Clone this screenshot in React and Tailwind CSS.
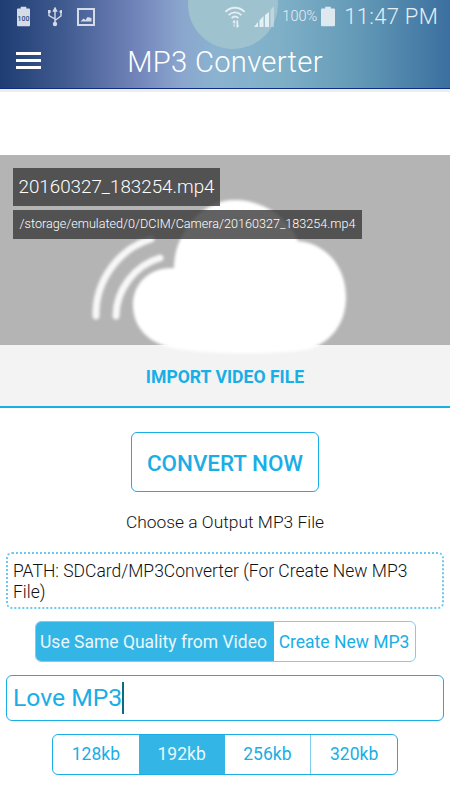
import React from "react";

const BITRATES = ["128kb", "192kb", "256kb", "320kb"];

const StatusLeft = () => (
  <div className="flex items-center">
    <svg width="13" height="21" viewBox="0 0 14 21" className="ml-[17px]">
      <path d="M4 0h6v2h3a1 1 0 0 1 1 1v17a1 1 0 0 1-1 1H1a1 1 0 0 1-1-1V3a1 1 0 0 1 1-1h3z" fill="#d5dce8" />
      <text x="7" y="15" textAnchor="middle" fontSize="7.5" fontFamily="Roboto" fontWeight="500" fill="#2d4a7c">100</text>
    </svg>
    <svg width="14" height="20" viewBox="0 0 14 20" className="ml-[18px]">
      <path d="M7 1v15M7 1L5.500 4h3zM1 5v3.500L7 12M13 5v4l-6 4.500" fill="none" stroke="#d5dce8" strokeWidth="1.400" />
      <rect x="0" y="3" width="2.600" height="3" fill="#d5dce8" />
      <circle cx="13" cy="4.500" r="1.500" fill="#d5dce8" />
      <circle cx="7" cy="17" r="2.200" fill="#d5dce8" />
    </svg>
    <svg width="18" height="18" viewBox="0 0 18 18" className="ml-[15px]">
      <rect x="1" y="1" width="16" height="16" fill="none" stroke="#d5dce8" strokeWidth="2" />
      <path d="M3.500 13.500l3-3 2 1.500 2-3 4 1v3.500z" fill="#d5dce8" />
    </svg>
  </div>
);

const StatusRight = () => (
  <div className="flex items-center">
    <svg width="22" height="26" viewBox="0 0 24 26" className="mb-[2px]">
      <path d="M1.500 8.500C7.500 2.500 16.500 2.500 22.500 8.500M5 12c4.200-4 9.800-4 14 0M8.300 15.300c2.200-2 5.200-2 7.400 0" fill="none" stroke="#e4eef3" strokeWidth="2" />
      <path d="M10.500 25v-5H9l2-3 2 3h-1.500v5zM13.500 18h2v5H17l-2.500 3-1-1z" fill="#e4eef3" />
    </svg>
    <svg width="20" height="21" viewBox="0 0 20 21" className="ml-[8px]">
      <path d="M0 21h4v-5zM5.500 21h4V10l-4 4.500zM11 21h4V6l-4 3z" fill="#e6eff4" />
      <path d="M16.500 21H20V0l-3.500 4z" fill="#e6eff4" opacity="0.45" />
    </svg>
    <span className="ml-[8px] pt-[1px] text-[14.500px] leading-none font-light text-[#e6eff4]">100%</span>
    <svg width="14" height="21" viewBox="0 0 15 21" className="ml-[4px]">
      <path d="M4.500 0h6v2H14a1 1 0 0 1 1 1v17a1 1 0 0 1-1 1H1a1 1 0 0 1-1-1V3a1 1 0 0 1 1-1h3.500z" fill="#dde8ef" />
    </svg>
    <span className="ml-[9px] mr-[12px] text-[22px] leading-none font-light tracking-[0.3px] text-[#e6eff4]">11:47 PM</span>
  </div>
);

const Header = () => (
  <div className="relative h-[89px] overflow-hidden border-b border-b-[#0f2f80] bg-[linear-gradient(90deg,#1f3d73_0%,#3f5a8f_14%,#7183b9_30%,#8aa5cd_40%,#8bb3d0_48%,#7fb0c8_62%,#6399b6_80%,#3a6f9f_100%)]">
    <div className="absolute left-[188px] top-[-41px] h-[90px] w-[90px] rounded-full bg-[#9fc2cf]"></div>
    <div className="relative flex h-[33px] items-center justify-between">
      <StatusLeft />
      <StatusRight />
    </div>
    <div className="relative flex h-[55px] items-center">
      <div className="ml-[16px] flex w-[25px] flex-col gap-[4px]">
        <div className="h-[3px] bg-white"></div>
        <div className="h-[3px] bg-white"></div>
        <div className="h-[3px] bg-white"></div>
      </div>
      <div className="absolute left-0 right-0 top-[10px] text-center text-[29.200px] leading-[38px] font-light tracking-[0.3px] text-white">
        MP3 Converter
      </div>
    </div>
  </div>
);

const VideoPanel = () => (
  <div className="relative">
    <svg width="450" height="210" viewBox="0 0 450 210" className="absolute left-0 top-0 z-10">
      <defs>
        <filter id="soft">
          <feGaussianBlur stdDeviation="1.600" />
        </filter>
      </defs>
      <g filter="url(#soft)">
        <path
          d="M168 192C146 186 133 170 133 150C133 128 150 112 174 113C174 80 200 45 235 45C262 45 288 62 298 86C326 88 346 112 346 142C346 168 332 186 310 194C280 200 200 200 168 192Z"
          fill="#ffffff"
        />
        <path d="M96 161C95 127 118 94 151 84" fill="none" stroke="#ffffff" strokeWidth="7" strokeLinecap="round" opacity="0.9" />
        <path d="M116 161C116 135 135 110 160 103" fill="none" stroke="#ffffff" strokeWidth="7" strokeLinecap="round" opacity="0.9" />
      </g>
    </svg>
    <div className="h-[190px] bg-[#b4b4b4] pl-[13px] pt-[13px]">
      <div className="relative z-20 flex h-[38px] w-[207px] items-center justify-center bg-[#3a3a3a]/80 text-[18.800px] leading-none font-light text-white">
        20160327_183254.mp4
      </div>
      <div className="relative z-20 mt-[4px] flex h-[29px] w-[349px] items-center justify-center bg-[#3a3a3a]/80 text-[12.600px] leading-none font-light text-white">
        /storage/emulated/0/DCIM/Camera/20160327_183254.mp4
      </div>
    </div>
    <div className="flex h-[63px] items-center justify-center border-b-2 border-b-[#19aee6] bg-[#f3f3f3] pt-[3px] text-[17.600px] font-bold text-[#19aee6]">
      IMPORT VIDEO FILE
    </div>
  </div>
);

export default function App() {
  return (
    <div className="h-[800px] w-[450px] overflow-hidden bg-white font-['Roboto',sans-serif]">
      <Header />
      <div className="h-[66px] border-t-[3px] border-t-[#eeeeee] bg-white"></div>
      <VideoPanel />

      <div className="mt-[24px] flex justify-center">
        <div className="flex h-[60px] w-[188px] items-center justify-center rounded-[6px] border border-[#19aee6] pt-[3px] text-[22.400px] font-medium text-[#19aee6]">
          CONVERT NOW
        </div>
      </div>

      <div className="mt-[20px] text-center text-[17.400px] leading-[20px] font-light text-[#111111]">Choose a Output MP3 File</div>

      <div className="mx-[6px] mt-[20px] h-[57px] rounded-[6px] border-2 border-dotted border-[#6cc8ec] px-[5px] py-[7px] text-[17.500px] leading-[20.500px] font-light text-[#111111]">
        PATH: SDCard/MP3Converter (For Create New MP3 File)
      </div>

      <div className="mt-[12px] flex justify-center">
        <div className="flex h-[41px] w-[381px] overflow-hidden rounded-[6px] border border-[#7fcdee] text-[17.500px]">
          <div className="flex w-[238px] items-center justify-center bg-[#33b5e5] pr-[2px] pt-[1px] text-[#eaf7fc]">
            Use Same Quality from Video
          </div>
          <div className="flex flex-1 items-center justify-center pt-[1px] text-[#19aee6]">Create New MP3</div>
        </div>
      </div>

      <div className="mx-[6px] mt-[13px] flex h-[46px] items-center rounded-[6px] border border-[#19aee6] pl-[6px] text-[24.700px] text-[#19aee6]">
        Love MP3
        <span className="h-[32px] w-[2px] bg-[#0d6a80]"></span>
      </div>

      <div className="mt-[13px] flex justify-center">
        <div className="flex h-[41px] w-[346px] overflow-hidden rounded-[6px] border border-[#19aee6] text-[17.500px]">
          {BITRATES.map((rate, idx) => (
            <div
              key={rate}
              className={
                rate === "192kb"
                  ? "flex flex-1 items-center justify-center bg-[#33b5e5] text-[#eaf7fc]"
                  : idx === 3
                  ? "flex flex-1 items-center justify-center border-l border-l-[#7fcdee] text-[#19aee6]"
                  : "flex flex-1 items-center justify-center text-[#19aee6]"
              }
            >
              {rate}
            </div>
          ))}
        </div>
      </div>
    </div>
  );
}
